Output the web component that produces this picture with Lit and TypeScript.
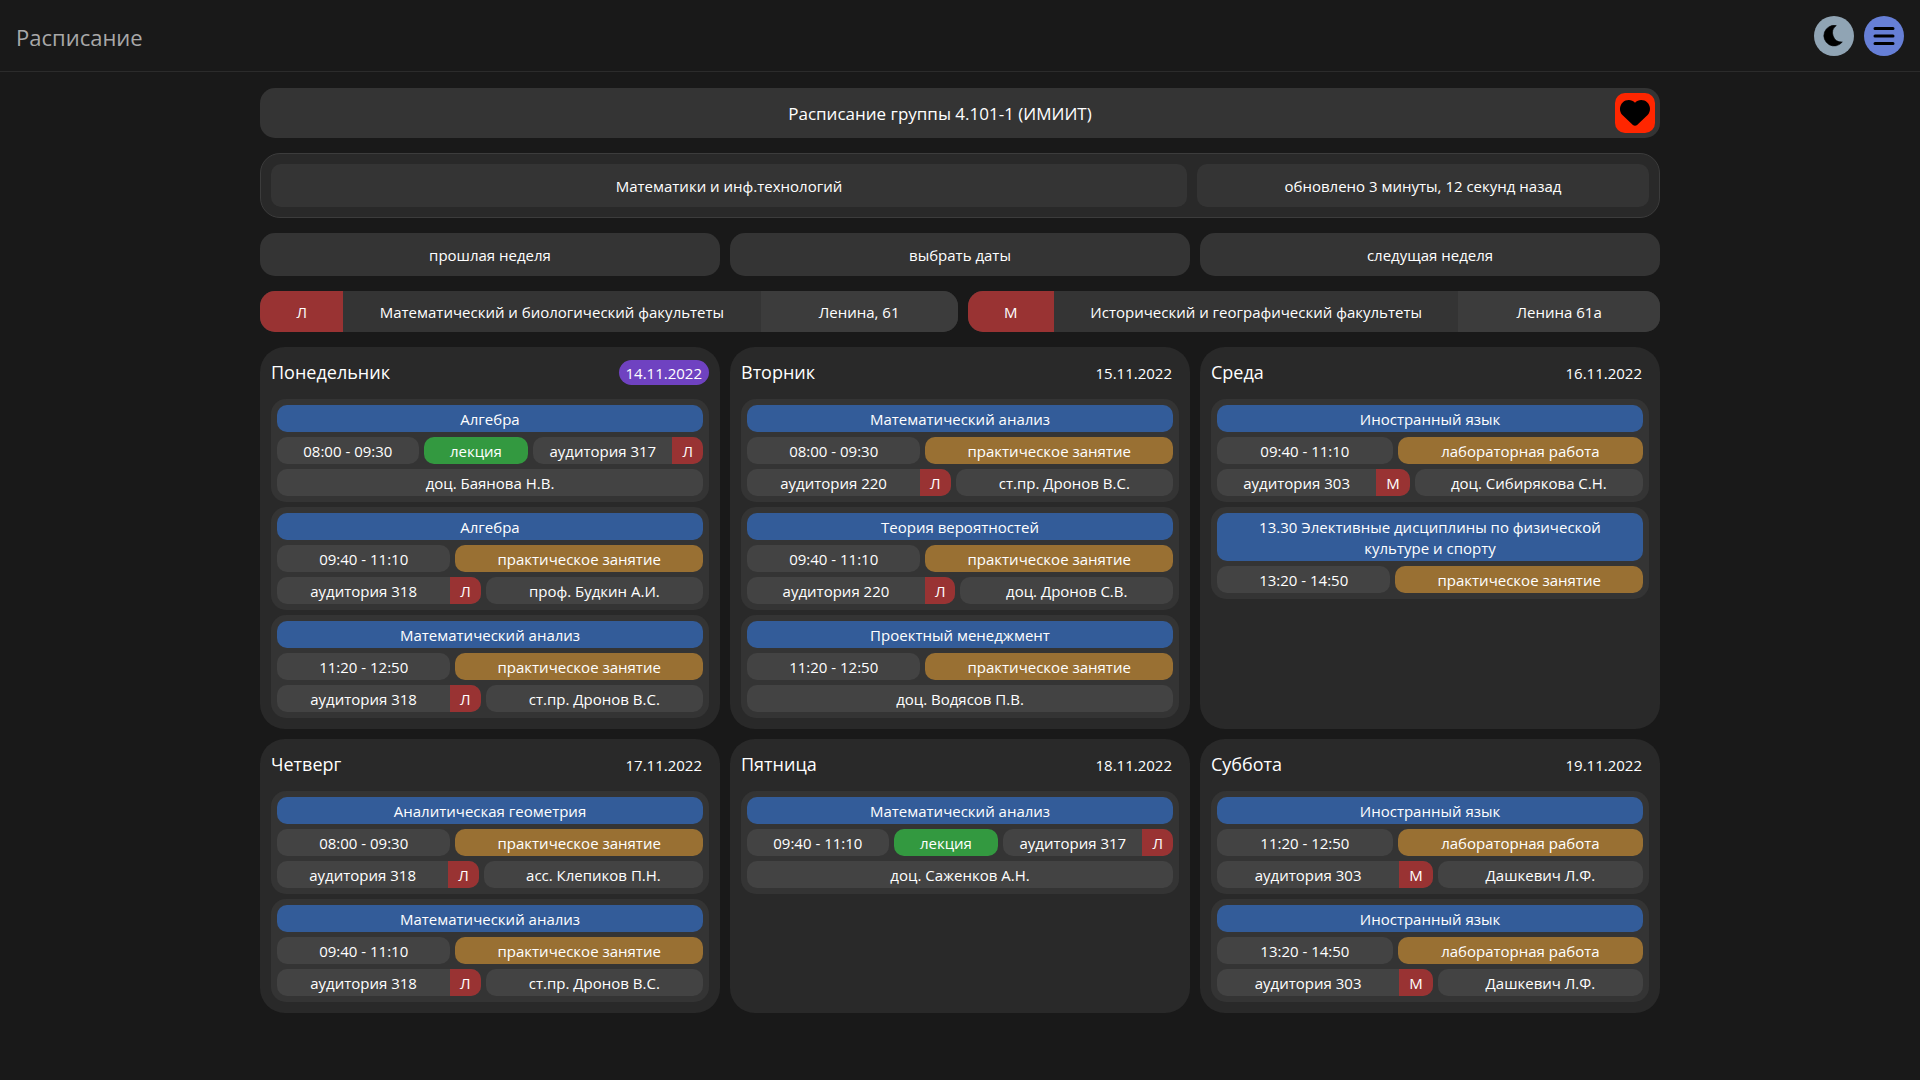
import { LitElement, html, css, svg, nothing } from "lit";
import { customElement, property } from "lit/decorators.js";

interface Lesson {
  title: string;
  time: string;
  kind: "лекция" | "практическое занятие" | "лабораторная работа";
  room?: string;
  building?: string;
  teacher?: string;
}

interface Day {
  name: string;
  date: string;
  today?: boolean;
  lessons: Lesson[];
}

const PRACTICE = "практическое занятие";
const LAB = "лабораторная работа";
const LECTURE = "лекция";

const DAYS: Day[] = [
  {
    name: "Понедельник",
    date: "14.11.2022",
    today: true,
    lessons: [
      { title: "Алгебра", time: "08:00 - 09:30", kind: LECTURE, room: "аудитория 317", building: "Л", teacher: "доц. Баянова Н.В." },
      { title: "Алгебра", time: "09:40 - 11:10", kind: PRACTICE, room: "аудитория 318", building: "Л", teacher: "проф. Будкин А.И." },
      { title: "Математический анализ", time: "11:20 - 12:50", kind: PRACTICE, room: "аудитория 318", building: "Л", teacher: "ст.пр. Дронов В.С." },
    ],
  },
  {
    name: "Вторник",
    date: "15.11.2022",
    lessons: [
      { title: "Математический анализ", time: "08:00 - 09:30", kind: PRACTICE, room: "аудитория 220", building: "Л", teacher: "ст.пр. Дронов В.С." },
      { title: "Теория вероятностей", time: "09:40 - 11:10", kind: PRACTICE, room: "аудитория 220", building: "Л", teacher: "доц. Дронов С.В." },
      { title: "Проектный менеджмент", time: "11:20 - 12:50", kind: PRACTICE, teacher: "доц. Водясов П.В." },
    ],
  },
  {
    name: "Среда",
    date: "16.11.2022",
    lessons: [
      { title: "Иностранный язык", time: "09:40 - 11:10", kind: LAB, room: "аудитория 303", building: "М", teacher: "доц. Сибирякова С.Н." },
      { title: "13.30 Элективные дисциплины по физической культуре и спорту", time: "13:20 - 14:50", kind: PRACTICE },
    ],
  },
  {
    name: "Четверг",
    date: "17.11.2022",
    lessons: [
      { title: "Аналитическая геометрия", time: "08:00 - 09:30", kind: PRACTICE, room: "аудитория 318", building: "Л", teacher: "асс. Клепиков П.Н." },
      { title: "Математический анализ", time: "09:40 - 11:10", kind: PRACTICE, room: "аудитория 318", building: "Л", teacher: "ст.пр. Дронов В.С." },
    ],
  },
  {
    name: "Пятница",
    date: "18.11.2022",
    lessons: [
      { title: "Математический анализ", time: "09:40 - 11:10", kind: LECTURE, room: "аудитория 317", building: "Л", teacher: "доц. Саженков А.Н." },
    ],
  },
  {
    name: "Суббота",
    date: "19.11.2022",
    lessons: [
      { title: "Иностранный язык", time: "11:20 - 12:50", kind: LAB, room: "аудитория 303", building: "М", teacher: "Дашкевич Л.Ф." },
      { title: "Иностранный язык", time: "13:20 - 14:50", kind: LAB, room: "аудитория 303", building: "М", teacher: "Дашкевич Л.Ф." },
    ],
  },
];

const BUILDINGS = [
  { code: "Л", name: "Математический и биологический факультеты", address: "Ленина, 61" },
  { code: "М", name: "Исторический и географический факультеты", address: "Ленина 61а" },
];

@customElement("lesson-card")
export class LessonCard extends LitElement {
  @property({ attribute: false }) lesson!: Lesson;

  static styles = css`
    :host {
      display: block;
    }
    .card {
      display: flex;
      flex-wrap: wrap;
      gap: 5px;
      padding: 6px;
      border-radius: 15px;
      background: #343434;
      text-align: center;
    }
    .chip,
    .title {
      box-sizing: border-box;
      margin: 0;
      padding: 4px 20px 2px;
      border-radius: 10px;
      font: inherit;
      line-height: 21px;
      background: #434343;
    }
    .chip {
      flex: 1 1 auto;
      white-space: nowrap;
    }
    .title {
      flex: 1 1 100%;
      background: #335c99;
    }
    .lecture {
      background: #339940;
    }
    .practice {
      background: #997033;
    }
    .place {
      display: flex;
      padding: 0;
      overflow: hidden;
    }
    .room {
      flex: 1 1 auto;
      padding: 4px 10px 2px;
    }
    .building {
      padding: 4px 10px 2px;
      background: #993333;
    }
  `;

  render() {
    const l = this.lesson;
    return html`
      <article class="card">
        <h3 class="title">${l.title}</h3>
        <span class="chip">${l.time}</span>
        <span class="chip ${l.kind === LECTURE ? "lecture" : "practice"}">${l.kind}</span>
        ${l.room
          ? html`<span class="chip place"><span class="room">${l.room}</span><span class="building">${l.building}</span></span>`
          : nothing}
        ${l.teacher ? html`<span class="chip">${l.teacher}</span>` : nothing}
      </article>
    `;
  }
}

@customElement("day-card")
export class DayCard extends LitElement {
  @property({ attribute: false }) day!: Day;

  static styles = css`
    :host {
      display: flex;
    }
    .day {
      flex: 1;
      display: flex;
      flex-direction: column;
      gap: 5px;
      padding: 11px;
      border-radius: 25px;
      background: #292929;
    }
    .head {
      display: flex;
      align-items: center;
      justify-content: space-between;
      margin-bottom: 8px;
    }
    .name {
      margin: 0;
      padding-top: 1px;
      font-size: 18px;
      font-weight: 400;
      line-height: 27px;
    }
    .date {
      padding: 3px 7px 1px;
      border-radius: 13px;
      line-height: 21px;
    }
    .today {
      background: #6f42c1;
    }
  `;

  render() {
    const d = this.day;
    return html`
      <section class="day">
        <header class="head">
          <h2 class="name">${d.name}</h2>
          <time class="date ${d.today ? "today" : ""}">${d.date}</time>
        </header>
        ${d.lessons.map((l) => html`<lesson-card .lesson=${l}></lesson-card>`)}
      </section>
    `;
  }
}

@customElement("app-root")
export class AppRoot extends LitElement {
  static styles = css`
    :host {
      display: block;
      min-height: 100vh;
      background: #191919;
      color: #fff;
      font-family: "Open Sans", "Noto Sans", sans-serif;
      font-size: 15px;
      line-height: 21px;
    }
    .topbar {
      display: flex;
      align-items: center;
      gap: 10px;
      padding: 16px 16px 15px;
      border-bottom: 1px solid #2b2b2b;
    }
    .brand {
      flex: 1;
      margin: 0;
      padding-top: 2px;
      font-size: 22px;
      font-weight: 400;
      line-height: 38px;
      color: #a8a8a8;
    }
    button {
      border: 0;
      padding: 0;
      margin: 0;
      font: inherit;
      color: inherit;
      cursor: pointer;
    }
    svg {
      overflow: visible;
    }
    .round {
      display: grid;
      place-items: center;
      width: 40px;
      height: 40px;
      border-radius: 50%;
      color: #000;
    }
    .theme {
      background: #90a4b4;
    }
    .menu {
      background: #667fd6;
    }
    .page {
      display: flex;
      flex-direction: column;
      gap: 15px;
      box-sizing: border-box;
      max-width: 1432px;
      margin: 0 auto;
      padding: 16px;
      text-align: center;
    }
    .group {
      display: flex;
      align-items: center;
      padding: 5px;
      border-radius: 15px;
      background: #343434;
    }
    .group-name {
      flex: 1;
      margin: 0;
      padding-top: 2px;
      font-size: 17px;
      font-weight: 400;
      line-height: 38px;
    }
    .like {
      display: grid;
      place-items: center;
      width: 40px;
      height: 40px;
      border-radius: 10px;
      background: #ff2600;
      color: #000;
    }
    .info {
      display: flex;
      gap: 10px;
      padding: 10px;
      border: 1px solid #3c3c3c;
      border-radius: 20px;
      background: #292929;
    }
    .info-item {
      padding: 12px 20px 10px;
      border-radius: 10px;
      background: #343434;
    }
    .faculty {
      flex: 24 1 auto;
    }
    .updated {
      flex: 5 1 auto;
    }
    .weeks,
    .days {
      display: grid;
      grid-template-columns: repeat(3, 1fr);
      gap: 10px;
    }
    .week {
      padding: 12px 20px 10px;
      border-radius: 15px;
      background: #343434;
    }
    .buildings {
      display: flex;
      gap: 10px;
    }
    .building {
      flex: 1 1 auto;
      display: flex;
      overflow: hidden;
      border-radius: 15px;
      background: #343434;
    }
    .cell {
      flex: 3 1 auto;
      padding: 11px 20px 9px;
    }
    .code {
      background: #993333;
    }
    .address {
      flex-grow: 7;
      background: #3c3c3c;
    }
    .days {
      text-align: left;
    }
  `;

  private moon() {
    return svg`<svg width="20" height="22" viewBox="0 0 20 22" fill="currentColor" stroke="currentColor" stroke-width="0.6" stroke-linejoin="round" aria-hidden="true">
      <path d="M12.3 0.6A10.3 10.3 0 1 0 18.3 17A9.1 9.1 0 0 1 12.3 0.6Z" />
    </svg>`;
  }

  private bars() {
    return svg`<svg width="22" height="20" viewBox="0 0 22 20" stroke="currentColor" stroke-width="3" stroke-linecap="round" aria-hidden="true">
      <path d="M2 2.5H20M2 10H20M2 17.5H20" />
    </svg>`;
  }

  private heart() {
    return svg`<svg width="30" height="26" viewBox="0 0 30 26" fill="currentColor" aria-hidden="true">
      <path d="M15 2.8C11.8 -0.9 6.2 -0.8 2.7 2.4C-0.8 5.8 -0.9 11.4 2.4 15L12.9 25C14.1 26.1 15.9 26.1 17.1 25L27.6 15C30.9 11.4 30.8 5.8 27.3 2.4C23.8 -0.8 18.2 -0.9 15 2.8Z" />
    </svg>`;
  }

  render() {
    return html`
      <header class="topbar">
        <h1 class="brand">Расписание</h1>
        <button class="round theme" aria-label="Сменить тему">${this.moon()}</button>
        <button class="round menu" aria-label="Меню">${this.bars()}</button>
      </header>
      <main class="page">
        <div class="group">
          <h2 class="group-name">Расписание группы 4.101-1 (ИМИИТ)</h2>
          <button class="like" aria-label="В избранное">${this.heart()}</button>
        </div>
        <div class="info">
          <span class="info-item faculty">Математики и инф.технологий</span>
          <span class="info-item updated">обновлено 3 минуты, 12 секунд назад</span>
        </div>
        <nav class="weeks">
          <button class="week">прошлая неделя</button>
          <button class="week">выбрать даты</button>
          <button class="week">следущая неделя</button>
        </nav>
        <div class="buildings">
          ${BUILDINGS.map(
            (b) => html`<div class="building">
              <span class="cell code">${b.code}</span>
              <span class="cell">${b.name}</span>
              <span class="cell address">${b.address}</span>
            </div>`,
          )}
        </div>
        <div class="days">${DAYS.map((d) => html`<day-card .day=${d}></day-card>`)}</div>
      </main>
    `;
  }
}
